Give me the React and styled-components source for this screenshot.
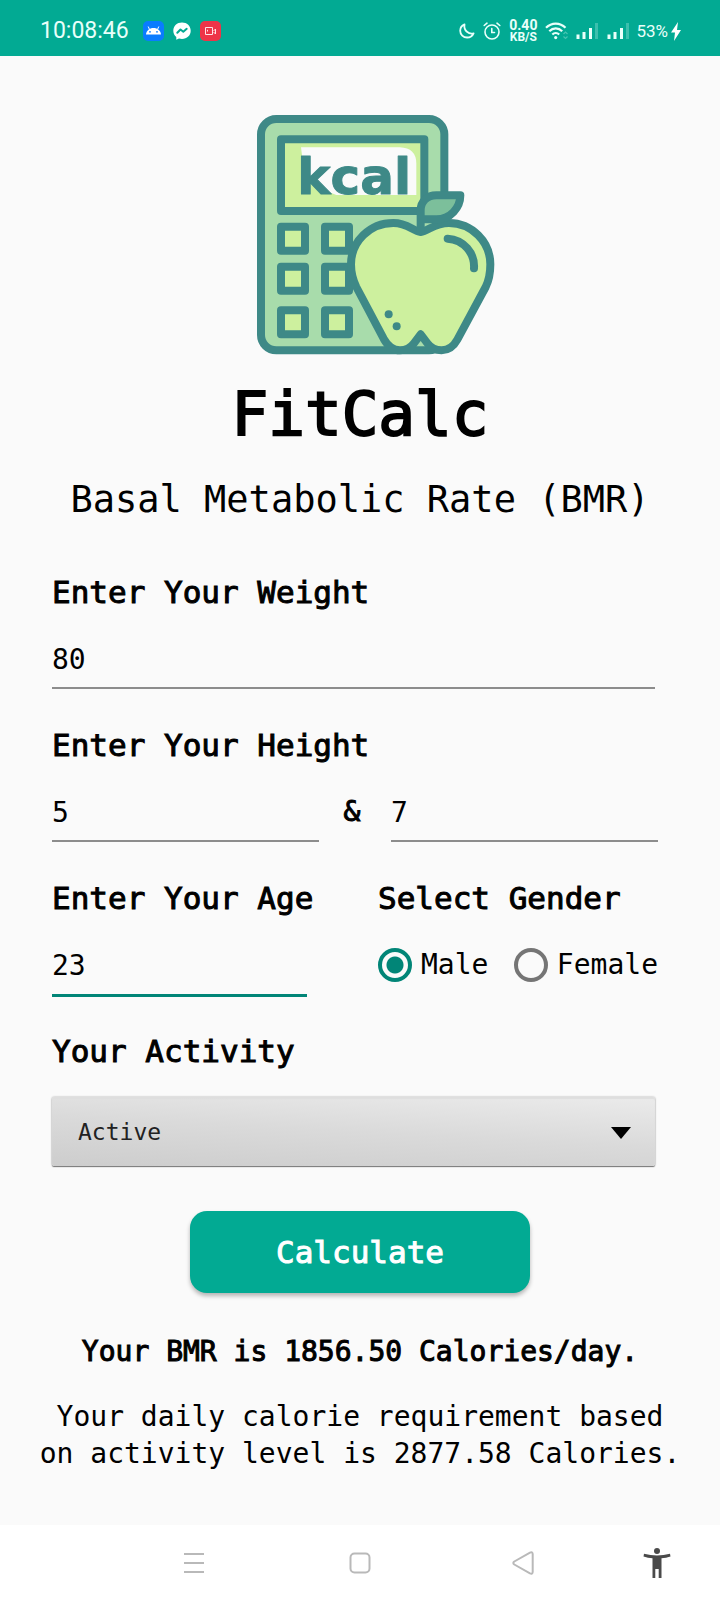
import React, { useState } from "react";
import styled, { createGlobalStyle } from "styled-components";

const teal = "#02aa93";
const accent = "#018577";
const mono = '"DejaVu Sans Mono", "Liberation Mono", monospace';

const GlobalStyle = createGlobalStyle`
  *, *::before, *::after { box-sizing: border-box; }
  body { margin: 0; background: #fafafa; color: #000; font-family: ${mono}; }
  button, input, select { font: inherit; color: inherit; margin: 0; }
`;

const Screen = styled.div`
  min-height: 100vh;
  display: flex;
  flex-direction: column;
`;

const StatusBar = styled.header`
  height: 56px;
  padding: 6px 39px 0 40px;
  display: flex;
  justify-content: space-between;
  align-items: center;
  background: ${teal};
  color: #e9fffa;
  font-family: Roboto, sans-serif;
`;

const StatusGroup = styled.div`
  display: flex;
  align-items: center;
  gap: ${(p) => p.$gap}px;
`;

const Clock = styled.time`
  font-size: 23px;
  line-height: 28px;
  margin-right: 5px;
`;

const Speed = styled.div`
  font-weight: 700;
  font-size: 12px;
  line-height: 12px;
  text-align: center;
`;

const SpeedValue = styled.div`
  font-size: 14px;
`;

const Battery = styled.div`
  display: flex;
  align-items: center;
  gap: 3px;
  margin-left: -2px;
  font-size: 17px;
  line-height: 20px;
`;

const Main = styled.main`
  flex: 1;
  padding: 59px 0 50px;
`;

const LogoBox = styled.div`
  display: flex;
  justify-content: center;
  padding-left: 32px;
`;

const Title = styled.h1`
  margin: 23px 0 0;
  font: 400 61px/72px ${mono};
  -webkit-text-stroke: 2px currentColor;
  text-align: center;
`;

const Subtitle = styled.h2`
  margin: 28px 0 0;
  font: 400 37px/44px ${mono};
  text-align: center;
`;

const Form = styled.form`
  margin-top: 50px;
  padding: 0 62px 0 52px;
  display: flex;
  flex-direction: column;
  gap: 36px;
`;

const Field = styled.div`
  display: flex;
  flex-direction: column;
  gap: ${(p) => p.$gap || 29}px;
  padding-right: ${(p) => p.$inset || 0}px;
`;

const FieldSet = styled.fieldset`
  border: 0;
  margin: 0;
  padding: 0;
  min-width: 0;
`;

const Caption = styled.label`
  display: block;
  padding: 0;
  font: 400 31px/40px ${mono};
  -webkit-text-stroke: 1px currentColor;
  white-space: nowrap;
`;

const TextInput = styled.input`
  width: 100%;
  min-width: 0;
  height: 48px;
  padding: 0 0 10px;
  border: 0;
  border-bottom: 2px solid #8c8c8c;
  border-radius: 0;
  outline: 0;
  background: transparent;
  font: 400 28px/32px ${mono};

  ${(p) => p.$active && `height: 50px; padding-bottom: 11px; border-bottom: 3px solid ${accent};`}
`;

const HeightRow = styled.div`
  margin-top: 29px;
  display: grid;
  grid-template-columns: 1fr 72px 1fr;
`;

const Ampersand = styled.span`
  padding-right: 6px;
  font: 400 28px/36px ${mono};
  -webkit-text-stroke: 1px currentColor;
  text-align: center;
`;

const AgeRow = styled.div`
  display: grid;
  grid-template-columns: minmax(0, 326fr) minmax(0, 280fr);
  margin-bottom: -2px;
`;

const RadioRow = styled.div`
  margin-top: 29px;
  height: 36px;
  display: flex;
  align-items: center;
  justify-content: space-between;
`;

const RadioLabel = styled.label`
  display: flex;
  align-items: center;
  gap: 9px;
  font: 400 28px/32px ${mono};
`;

const Radio = styled.input`
  appearance: none;
  flex: none;
  width: 34px;
  height: 34px;
  border: 4px solid #757575;
  border-radius: 50%;

  &:checked {
    border-color: ${accent};
    background: radial-gradient(circle, ${accent} 8px, transparent 9px);
  }
`;

const SelectBox = styled.div`
  position: relative;
`;

const Select = styled.select`
  appearance: none;
  display: block;
  width: 100%;
  height: 69px;
  padding: 0 60px 0 26px;
  border: 0;
  border-radius: 2px;
  background: linear-gradient(183deg, #ebebeb, #dadada 50%, #cdcdcd);
  box-shadow: 0 1px 1px #777, 0 0 2px #999, inset 0 2px 1px #dedede;
  color: #222;
  font: 400 23px/28px ${mono};
`;

const SelectArrow = styled.svg`
  position: absolute;
  right: 24px;
  top: 30px;
  pointer-events: none;
`;

const Submit = styled.button`
  align-self: center;
  width: 340px;
  height: 82px;
  margin: 9px 0 0 10px;
  border: 0;
  border-radius: 17px;
  background: ${teal};
  box-shadow: 0 3px 4px rgba(0, 0, 0, 0.28);
  color: #fff;
  font: 400 31px/40px ${mono};
  -webkit-text-stroke: 1px currentColor;
`;

const Result = styled.p`
  margin: 41px 0 0;
  font: 400 28px/36px ${mono};
  -webkit-text-stroke: 1px currentColor;
  text-align: center;
`;

const Requirement = styled.p`
  margin: 28px 36px 0;
  font: 400 28px/37px ${mono};
  text-align: center;
`;

const NavBar = styled.nav`
  height: 75px;
  padding: 0 9px 0 111px;
  display: grid;
  grid-template-columns: 166fr 166fr 160fr 108fr;
  background: #fff;
`;

const NavButton = styled.button`
  display: flex;
  align-items: center;
  justify-content: center;
  padding: 0;
  border: 0;
  background: none;
`;

const ink = "#3e8987";
const lime = "#cdf09e";

function Logo() {
  return (
    <svg width="238" height="240" viewBox="52 44 714 720" role="img" aria-label="FitCalc logo">
      <g stroke={ink} strokeWidth="24" strokeLinejoin="round" strokeLinecap="round">
        <rect x="64" y="56" width="550" height="694" rx="46" fill="#a8dcab" />
        <rect x="124" y="117" width="430" height="215" fill={lime} />
        <path d="M184 141H480Q530 143 530 190V284H290Q186 248 187 165Z" fill="#fafafa" stroke="none" />
        {[379, 499, 630].map((y) =>
          [124, 256].map((x) => (
            <rect key={`${x}-${y}`} x={x} y={y} width="72" height="72" fill={lime} />
          ))
        )}
        <path
          d="M543 395C520 392 503 368 461 368C390 368 334 424 334 492C334 518 340 540 350 560L432 715C445 738 460 750 481 750C500 750 512 744 522 730L543 702L564 730C574 744 586 750 606 750C628 750 642 738 653 718L738 560C748 540 752 515 752 492C752 424 696 368 628 368C585 368 566 392 543 395Z"
          fill={lime}
        />
        <path d="M543 392V330C543 303 563 285 590 285H662C662 322 632 357 590 357H545" fill="#7cbf9b" />
        <path d="M624 415C672 418 706 458 703 504" fill="none" />
      </g>
      <circle cx="447" cy="642" r="12" fill={ink} />
      <circle cx="471" cy="678" r="12" fill={ink} />
      <text
        x="173"
        y="281"
        fontFamily='"DejaVu Sans", sans-serif'
        fontWeight="700"
        fontSize="150"
        fill={ink}
        stroke={ink}
        strokeWidth="3"
        strokeLinejoin="round"
      >
        kcal
      </text>
    </svg>
  );
}

function AndroidIcon() {
  return (
    <svg width="21" height="20" viewBox="0 0 21 20" aria-hidden="true">
      <rect width="21" height="20" rx="5" fill="#0a7cff" />
      <path d="M3 13.5C3.4 9.5 6.500 7 10.500 7S17.600 9.500 18 13.500Z" fill="#fff" />
      <path d="M6.500 8.500L5.200 5.500M14.500 8.500L15.800 5.500" stroke="#fff" />
      <circle cx="7" cy="10.800" r="0.900" fill="#0a7cff" />
      <circle cx="14" cy="10.800" r="0.900" fill="#0a7cff" />
    </svg>
  );
}

function MessengerIcon() {
  return (
    <svg width="18" height="18" viewBox="0 0 18 18" aria-hidden="true">
      <path d="M9 0.500C4 0.500 0.300 4 0.300 8.700C0.300 11.300 1.400 13.500 3.300 15V17.800L6 16.500C7 16.800 8 16.900 9 16.900C14 16.900 17.700 13.400 17.700 8.700S14 0.500 9 0.500Z" fill="#fff" />
      <path d="M4.300 10.800L7.500 7.500L10.300 9.700L13.700 6.800" fill="none" stroke={teal} strokeWidth="2" strokeLinejoin="round" strokeLinecap="round" />
    </svg>
  );
}

function RecorderIcon() {
  return (
    <svg width="21" height="20" viewBox="0 0 21 20" aria-hidden="true">
      <rect width="21" height="20" rx="5" fill="#ee3448" />
      <path d="M5.500 6.500H12.500V13.500H5.500ZM7.500 8.800V10.500M13.500 10L15.500 8V13L13.500 11" fill="none" stroke="#ffe3e6" />
    </svg>
  );
}

function MoonIcon() {
  return (
    <svg width="16" height="16" viewBox="0 0 16 16" aria-hidden="true">
      <path d="M5.500 1.300C3 2.300 1.200 4.800 1.200 7.700C1.200 11.600 4.300 14.500 8.100 14.500C11 14.500 13.500 12.800 14.600 10.300C10 11.500 4.500 8 5.500 1.300Z" fill="none" stroke="currentColor" strokeWidth="1.800" strokeLinejoin="round" />
    </svg>
  );
}

function AlarmIcon() {
  return (
    <svg width="18" height="18" viewBox="0 0 18 18" fill="none" stroke="currentColor" strokeWidth="1.600" strokeLinecap="round" aria-hidden="true">
      <circle cx="9" cy="10" r="7" />
      <path d="M8.800 6.500V10.500H11.500M1.200 3.500L4 1.200M16.800 3.500L14 1.200" />
    </svg>
  );
}

function WifiIcon() {
  return (
    <svg width="23" height="18" viewBox="0 0 23 18" fill="none" stroke="currentColor" strokeWidth="2.200" aria-hidden="true">
      <path d="M1 5.800C6.500 0.200 15 0.200 20.500 5.800M4.300 9.300C8 5.500 13.500 5.500 17.200 9.300M7.300 12.500C9.300 10.600 12.200 10.600 14.200 12.500" />
      <circle cx="10.700" cy="15.600" r="1.600" fill="currentColor" stroke="none" />
      <path d="M18.500 12L20.500 10L22.500 12M18.500 14.500L20.500 16.500L22.500 14.500" strokeWidth="1.200" opacity="0.3" />
    </svg>
  );
}

function SignalIcon() {
  return (
    <svg width="23" height="18" viewBox="0 0 23 18" stroke="currentColor" strokeWidth="3" aria-hidden="true">
      <path d="M2 12.500V17M8 10V17M14.500 6V17" />
      <path d="M20.500 1V17" opacity="0.25" />
    </svg>
  );
}

function BoltIcon() {
  return (
    <svg width="10" height="19" viewBox="0 0 10 19" aria-hidden="true">
      <path d="M7 0L0 10.500H4L3 19L10 8H6Z" fill="#fff" />
    </svg>
  );
}

export default function App() {
  const [gender, setGender] = useState("male");

  return (
    <Screen>
      <GlobalStyle />
      <StatusBar>
        <StatusGroup $gap={9}>
          <Clock>10:08:46</Clock>
          <AndroidIcon />
          <MessengerIcon />
          <RecorderIcon />
        </StatusGroup>
        <StatusGroup $gap={8}>
          <MoonIcon />
          <AlarmIcon />
          <Speed>
            <SpeedValue>0.40</SpeedValue>
            KB/S
          </Speed>
          <WifiIcon />
          <SignalIcon />
          <SignalIcon />
          <Battery>
            53%
            <BoltIcon />
          </Battery>
        </StatusGroup>
      </StatusBar>

      <Main>
        <LogoBox>
          <Logo />
        </LogoBox>
        <Title>FitCalc</Title>
        <Subtitle>Basal Metabolic Rate (BMR)</Subtitle>

        <Form onSubmit={(e) => e.preventDefault()}>
          <Field $inset={3}>
            <Caption htmlFor="weight">Enter Your Weight</Caption>
            <TextInput id="weight" inputMode="numeric" defaultValue="80" />
          </Field>

          <FieldSet>
            <Caption as="legend">Enter Your Height</Caption>
            <HeightRow>
              <TextInput aria-label="Feet" inputMode="numeric" defaultValue="5" />
              <Ampersand>&amp;</Ampersand>
              <TextInput aria-label="Inches" inputMode="numeric" defaultValue="7" />
            </HeightRow>
          </FieldSet>

          <AgeRow>
            <Field $inset={71}>
              <Caption htmlFor="age">Enter Your Age</Caption>
              <TextInput id="age" inputMode="numeric" defaultValue="23" $active />
            </Field>
            <FieldSet>
              <Caption as="legend">Select Gender</Caption>
              <RadioRow>
                <RadioLabel>
                  <Radio type="radio" name="gender" checked={gender === "male"} onChange={() => setGender("male")} />
                  Male
                </RadioLabel>
                <RadioLabel>
                  <Radio type="radio" name="gender" checked={gender === "female"} onChange={() => setGender("female")} />
                  Female
                </RadioLabel>
              </RadioRow>
            </FieldSet>
          </AgeRow>

          <Field $inset={3} $gap={26}>
            <Caption htmlFor="activity">Your Activity</Caption>
            <SelectBox>
              <Select id="activity" defaultValue="Active">
                <option>Active</option>
              </Select>
              <SelectArrow width="20" height="12" viewBox="0 0 20 12" aria-hidden="true">
                <path d="M0 0H20L10 12Z" fill="#000" />
              </SelectArrow>
            </SelectBox>
          </Field>

          <Submit type="submit">Calculate</Submit>
        </Form>

        <Result>Your BMR is 1856.50 Calories/day.</Result>
        <Requirement>Your daily calorie requirement based on activity level is 2877.58 Calories.</Requirement>
      </Main>

      <NavBar>
        <NavButton aria-label="Recent apps">
          <svg width="20" height="22" viewBox="0 0 20 22" stroke="#b9b9b9" strokeWidth="2">
            <path d="M0 2H20M0 11H20M0 20H20" />
          </svg>
        </NavButton>
        <NavButton aria-label="Home">
          <svg width="22" height="22" viewBox="0 0 22 22" fill="none" stroke="#b9b9b9" strokeWidth="2">
            <rect x="1.500" y="1.500" width="19" height="19" rx="4" />
          </svg>
        </NavButton>
        <NavButton aria-label="Back">
          <svg width="22" height="24" viewBox="0 0 22 24" fill="none" stroke="#b9b9b9" strokeWidth="2" strokeLinejoin="round">
            <path d="M2.300 10.500L18 1.600Q20.500 0.600 20.700 3V21Q20.500 23.400 18 22.400L2.300 13.500Q0.300 12 2.300 10.500Z" />
          </svg>
        </NavButton>
        <NavButton aria-label="Accessibility">
          <svg width="28" height="30" viewBox="0 0 28 30" fill="#4a4a4a">
            <circle cx="14" cy="3" r="3" />
            <path d="M1 5.800Q14 9.200 27 5.800L27.500 8.500Q23 9.900 18.500 10.300V30H15.700V21H12.300V30H9.500V10.300Q5 9.900 0.500 8.500Z" />
          </svg>
        </NavButton>
      </NavBar>
    </Screen>
  );
}
